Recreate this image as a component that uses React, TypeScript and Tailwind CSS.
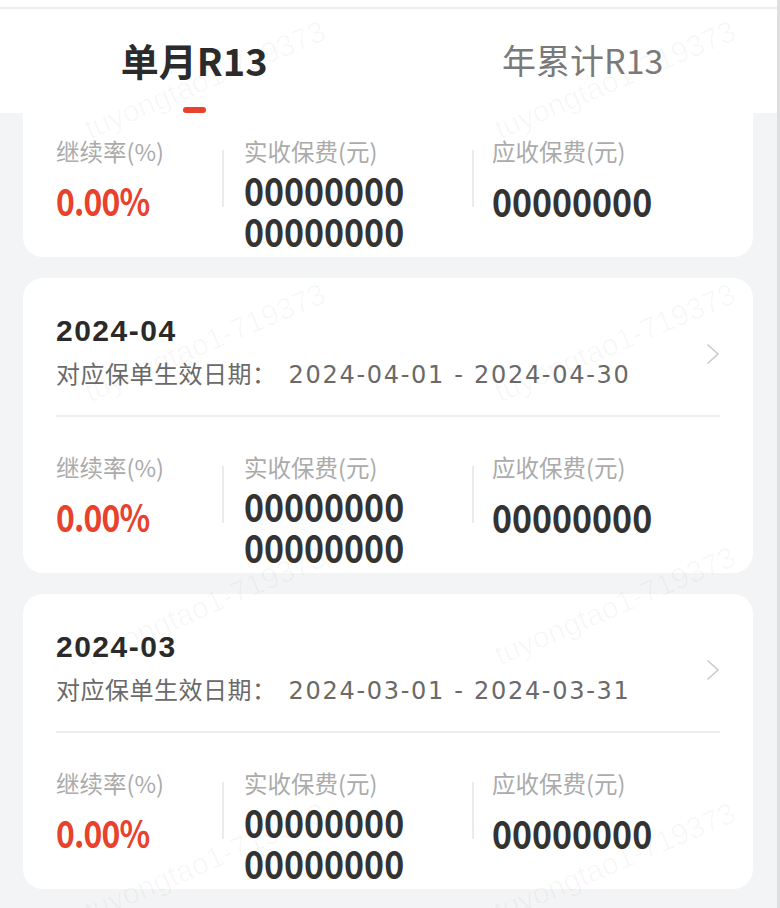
import React from "react";

const CJK = '"Noto Sans CJK SC", sans-serif';

type CardData = { month: string; range: string };

function Stats() {
  return (
    <div className="flex pt-[35px]">
      <div className="w-[166px] flex flex-col">
        <div className="text-[23.5px] leading-[30px] text-[#ababab]">继续率(%)</div>
        <div className="mt-[14px] text-[38px] leading-[40px] font-semibold text-[#e8412c] tracking-[-1px]">
          <span className="inline-block origin-left scale-x-[0.84]">0.00%</span>
        </div>
      </div>
      <div className="self-start mt-[14px] h-[57px] w-[2px] bg-[#ebebeb]" />
      <div className="w-[248px] pl-[20px] flex flex-col">
        <div className="text-[23.5px] leading-[30px] text-[#ababab]">实收保费(元)</div>
        <div className="mt-[3px] text-[39px] leading-[41px] font-semibold text-[#333333] flex flex-col items-start">
          <span className="inline-block origin-left scale-x-[0.87]">00000000</span>
          <span className="inline-block origin-left scale-x-[0.87]">00000000</span>
        </div>
      </div>
      <div className="self-start mt-[14px] h-[57px] w-[2px] bg-[#ebebeb]" />
      <div className="flex-1 pl-[18px] flex flex-col">
        <div className="text-[23.5px] leading-[30px] text-[#ababab]">应收保费(元)</div>
        <div className="mt-[14px] text-[39px] leading-[41px] font-semibold text-[#333333]">
          <span className="inline-block origin-left scale-x-[0.87]">00000000</span>
        </div>
      </div>
    </div>
  );
}

function Card({ data }: { data: CardData }) {
  return (
    <div className="h-[295px] rounded-[20px] bg-white px-[33px] pt-[35px]">
      <div className="flex items-center">
        <div className="flex-1">
          <div
            className="text-[30px] leading-[36px] font-bold text-[#2a2a2a] tracking-[1.5px]"
            style={{ fontFamily: '"Liberation Sans", Arial, sans-serif' }}
          >
            {data.month}
          </div>
          <div className="mt-[8px] text-[24px] leading-[32px] text-[#6a6a6a] whitespace-nowrap">
            <span className="tracking-[0.5px]">对应保单生效日期：</span>
            <span
              className="ml-[12px] text-[24px] tracking-[1.7px]"
              style={{ fontFamily: '"DejaVu Sans", sans-serif' }}
            >
              {data.range}
            </span>
          </div>
        </div>
        <svg width="14" height="22" viewBox="0 0 14 22" className="shrink-0 mt-[4px]">
          <path d="M1.5 1.5 L12 11 L1.5 20.5" fill="none" stroke="#c9c9c9" strokeWidth="1.6" />
        </svg>
      </div>
      <div className="mt-[24px] h-[2px] bg-[#eeeeee]" />
      <Stats />
    </div>
  );
}

function Watermarks() {
  const rows = [80, 343, 606, 862];
  const cols = [205, 615];
  const items: { x: number; y: number }[] = [];
  rows.forEach((y) => cols.forEach((x) => items.push({ x, y })));
  return (
    <div className="pointer-events-none absolute inset-0 z-20 overflow-hidden">
      {items.map((p, i) => (
        <div
          key={i}
          className="absolute text-[30px] leading-[30px] text-black/[0.03] whitespace-nowrap"
          style={{
            left: p.x,
            top: p.y,
            transform: "translate(-50%, -50%) rotate(-23deg)",
            fontFamily: '"Liberation Sans", sans-serif',
          }}
        >
          tuyongtao1-719373
        </div>
      ))}
    </div>
  );
}

export default function App() {
  const cards: CardData[] = [
    { month: "2024-05", range: "2024-05-01 - 2024-05-31" },
    { month: "2024-04", range: "2024-04-01 - 2024-04-30" },
    { month: "2024-03", range: "2024-03-01 - 2024-03-31" },
  ];
  return (
    <div
      className="relative flex w-[780px] h-[908px] overflow-hidden bg-[#f3f4f6]"
      style={{ fontFamily: CJK }}
    >
      <div className="w-[777px] flex flex-col">
        <div className="relative z-10 bg-white">
          <div className="h-[7px] bg-white" />
          <div className="h-[2px] bg-[#ececec]" />
          <div className="flex h-[104px]">
            <div className="flex-1 flex flex-col items-center pt-[27px]">
              <div className="text-[38px] leading-[48px] font-bold text-[#2b2b2b]">单月R13</div>
              <div className="mt-[23px] h-[6px] w-[23px] rounded-full bg-[#e8412c]" />
            </div>
            <div className="flex-1 flex flex-col items-center pt-[27px]">
              <div className="text-[34px] leading-[48px] text-[#7a7a7a]">年累计R13</div>
            </div>
          </div>
        </div>
        <div className="-mt-[151px] flex flex-col gap-[21px] pl-[23px] pr-[24px]">
          {cards.map((c) => (
            <Card key={c.month} data={c} />
          ))}
        </div>
      </div>
      <div className="w-[3px] bg-[#dedede]" />
      <Watermarks />
    </div>
  );
}
